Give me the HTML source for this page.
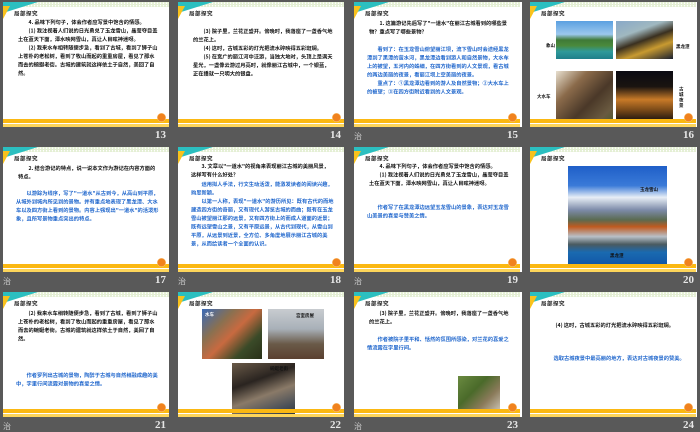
<!DOCTYPE html>
<html><head><meta charset="utf-8"><style>
*{margin:0;padding:0;box-sizing:border-box}
body{width:700px;height:431px;background:#595959;position:relative;overflow:hidden;font-family:"Liberation Sans","Noto Sans CJK SC",sans-serif}
.s{position:absolute;width:166px;height:125px;background:#fff;overflow:hidden}
.in{position:absolute;left:0;top:0;width:332px;height:250px;transform:scale(.5);transform-origin:0 0}
.top{position:absolute;left:0;top:0;width:332px;height:10px;background:#e4efd4;background-image:radial-gradient(circle,#fff 1.2px,transparent 1.6px);background-size:6px 5px}
.tri1{position:absolute;left:0;top:0;width:0;height:0;border-top:22px solid #2bbfc0;border-right:70px solid transparent}
.tri2{position:absolute;left:0;top:8px;width:0;height:0;border-top:26px solid #f9c21c;border-right:14px solid transparent}
.b1{position:absolute;left:0;bottom:8px;width:332px;height:8px;background:#fbb812}
.b2{position:absolute;left:0;bottom:0;width:332px;height:6px;background:#fdd55a}
.pn{position:absolute;right:6px;bottom:10px;width:18px;height:18px;border-radius:50%;background:#f0821e;border:1.5px solid #fbd08a}
.h{position:absolute;left:22px;top:15px;font:bold 11px "Noto Sans CJK SC",sans-serif;color:#222;letter-spacing:1px}
.t{position:absolute;left:30px;right:20px;font:bold 10.5px/17px "Noto Sans CJK SC",sans-serif;color:#111}
.t.bl{color:#1f66cc}
.t p{text-indent:2em}
.lab{position:absolute;width:30px;text-align:right;font:bold 11px "Liberation Serif",serif;color:#e6e6e6}
.zh{position:absolute;font:8px "Noto Sans CJK SC",sans-serif;color:#cfcfcf}
.ph{position:absolute}
.cap{position:absolute;font:bold 9px "Noto Sans CJK SC",sans-serif;color:#111}
</style></head><body>

<!-- Row 1 -->
<div class="s" style="left:3px;top:2px"><div class="in"><div class="top"></div><div class="tri1"></div><div class="tri2"></div><div class="h">局部探究</div>
<div class="t" style="top:32px"><p>4. 品味下列句子，体会作者应写景中饱含的情感。</p><p>(1) 我注视着人们说的日光勇兑了玉龙雪山，晶莹夺目盖土在蓝天下面，潭水映网雪山，真让人目眩神迷呀。</p><p>(2) 我来水车相转随便步急，看到了古城，看到了狮子山上苍朴的老松树，看到了牧山而起的重重房屋，看见了那水而去的蜿蜒老街。古城的建筑就这样依土于自然，美回了自然。</p></div>
<div class="b1"></div><div class="b2"></div><div class="pn"></div></div></div>

<div class="s" style="left:178px;top:2px"><div class="in"><div class="top"></div><div class="tri1"></div><div class="tri2"></div><div class="h">局部探究</div>
<div class="t" style="top:50px"><p>(3) 院子里，兰花正盛开。傍晚时，我落座了一盏香气地的兰花上。</p><p>(4) 这时，古城五彩的灯光把流水碎映得五彩斑斓。</p><p>(5) 在宽广的丽江河中泛游，当独大地时，头顶上是满天星光，一盏像云游过月亮时，就像丽江古城中，一个银蓝，正在播就一只明大的银盘。</p></div>
<div class="b1"></div><div class="b2"></div><div class="pn"></div></div></div>

<div class="s" style="left:354px;top:2px;width:168px"><div class="in"><div class="top"></div><div class="tri1"></div><div class="tri2"></div><div class="h">局部探究</div>
<div class="t" style="top:34px"><p>1. 这篇游记先后写了"一道水"在丽江古城看到的哪些景物？重点写了哪些景物？</p></div>
<div class="t bl" style="top:86px;left:26px"><p>看到了：在玉龙雪山俯望丽江坝，流下雪山时会途经黑龙潭到了黑潭的萤水河，黑龙潭边看到游人和自然景物，大水车上的被望，五河内的蛛细，在四方街看到的人文景观，看古城的两边美丽的夜景，看丽江坝上空美丽的夜景。</p><p>重点了：①黑龙潭边看到的游人及自然景物；②大水车上的被望；③在四方街附近看到的人文景观。</p></div>
<div class="b1"></div><div class="b2"></div><div class="pn"></div></div></div>

<div class="s" style="left:530px;top:2px;width:167px"><div class="in"><div class="top"></div><div class="tri1"></div><div class="tri2"></div><div class="h">局部探究</div>
<div class="ph" style="left:52px;top:38px;width:114px;height:76px;background:linear-gradient(180deg,#5aa0e0 0%,#9cc8ee 35%,#3f7a36 50%,#4a8a3c 65%,#2f9a9a 80%,#1f7f8a 100%)"></div>
<div class="ph" style="left:172px;top:38px;width:114px;height:76px;background:linear-gradient(160deg,#88a8c8 0%,#a0b8c0 30%,#3a3020 50%,#c89a30 70%,#1a2030 100%)"></div>
<div class="ph" style="left:52px;top:138px;width:114px;height:104px;background:linear-gradient(135deg,#e8e0d0 0%,#8a6a4a 30%,#4a3828 60%,#6a5a40 85%,#4a5a30 100%)"></div>
<div class="ph" style="left:172px;top:138px;width:114px;height:104px;background:linear-gradient(180deg,#0a0a12 0%,#1a1410 30%,#c87a28 55%,#7a4a18 75%,#0a0a10 100%)"></div>
<div class="cap" style="left:32px;top:80px">象山</div><div class="cap" style="left:292px;top:82px">黑龙潭</div>
<div class="cap" style="left:14px;top:182px">大水车</div><div class="cap" style="left:298px;top:168px;width:14px;line-height:11px">古城夜景</div>
<div class="b1"></div><div class="b2"></div><div class="pn"></div></div></div>

<div class="lab" style="left:136px;top:129px">13</div>
<div class="lab" style="left:311px;top:129px">14</div>
<div class="zh" style="left:354px;top:131px">治</div><div class="lab" style="left:488px;top:129px">15</div>
<div class="lab" style="left:664px;top:129px">16</div>

<!-- Row 2 -->
<div class="s" style="left:3px;top:147px"><div class="in"><div class="top"></div><div class="tri1"></div><div class="tri2"></div><div class="h">局部探究</div>
<div class="t" style="top:34px"><p>2. 结合游记的特点，说一说本文作为游记在内容方面的特点。</p></div>
<div class="t bl" style="top:84px;left:26px"><p>以游踪为线序，写了"一道水"从古到今，从高山到平原，从城外到城内所见到的景物。并有重点地表现了黑龙潭、大水车以及四方街上看到的景物。内容上强现出"一道水"的活泼形象，且所写景物重点突出的特点。</p></div>
<div class="b1"></div><div class="b2"></div><div class="pn"></div></div></div>

<div class="s" style="left:178px;top:147px"><div class="in"><div class="top"></div><div class="tri1"></div><div class="tri2"></div><div class="h">局部探究</div>
<div class="t" style="top:30px;left:26px"><p>3. 文章以"一道水"的视角来表现丽江古城的美丽风景，这样写有什么好处？</p></div>
<div class="t bl" style="top:66px;left:26px"><p>运用拟人手法，行文生动活泼，能激发读者的阅读兴趣，购思新颖。</p><p>以第一人称，表现"一道水"的游历所见：既有古代的而地建造四方街的奇丽，又有现代人游览古城的而曲；既有在玉龙雪山被望丽江那的远景，又有四方街上的而成人道面的近景；既有远望雪山之景，又有平原远景，从古代到现代，从雪山到平原，从远景到近景，全方位、多角度地展示丽江古城的美景，从而给读者一个全面的认识。</p></div>
<div class="b1"></div><div class="b2"></div><div class="pn"></div></div></div>

<div class="s" style="left:354px;top:147px;width:168px"><div class="in"><div class="top"></div><div class="tri1"></div><div class="tri2"></div><div class="h">局部探究</div>
<div class="t" style="top:30px"><p>4. 品味下列句子，体会作者应写景中饱含的情感。</p><p>(1) 我注视着人们说的日光勇兑了玉龙雪山，晶莹夺目盖土在蓝天下面，潭水映网雪山，真让人目眩神迷呀。</p></div>
<div class="t bl" style="top:112px;left:26px"><p>作者写了在黑龙潭边远望玉龙雪山的景象，表达对玉龙雪山美景的喜爱与赞美之情。</p></div>
<div class="b1"></div><div class="b2"></div><div class="pn"></div></div></div>

<div class="s" style="left:530px;top:147px;width:167px"><div class="in"><div class="top"></div><div class="tri1"></div><div class="tri2"></div><div class="h">局部探究</div>
<div class="ph" style="left:76px;top:38px;width:198px;height:196px;background:linear-gradient(180deg,#1f5fc8 0%,#3a7ad8 20%,#e8eef6 32%,#7c8aa8 45%,#5a6a50 55%,#c05a20 62%,#b8c0c8 72%,#4a5a60 80%,#1a6ab0 88%,#1258a8 100%)"></div>
<div class="cap" style="left:220px;top:78px">玉龙雪山</div><div class="cap" style="left:160px;top:210px">黑龙潭</div>
<div class="b1"></div><div class="b2"></div><div class="pn"></div></div></div>

<div class="zh" style="left:3px;top:276px">治</div><div class="lab" style="left:136px;top:274px">17</div>
<div class="zh" style="left:178px;top:276px">治</div><div class="lab" style="left:311px;top:274px">18</div>
<div class="zh" style="left:354px;top:276px">治</div><div class="lab" style="left:488px;top:274px">19</div>
<div class="lab" style="left:664px;top:274px">20</div>

<!-- Row 3 -->
<div class="s" style="left:3px;top:292px"><div class="in"><div class="top"></div><div class="tri1"></div><div class="tri2"></div><div class="h">局部探究</div>
<div class="t" style="top:34px"><p>(2) 我来水车相转随便步急，看到了古城，看到了狮子山上苍朴的老松树，看到了牧山而起的重重房屋，看见了那水而去的蜿蜒老街。古城的建筑就这样依土于自然，美回了自然。</p></div>
<div class="t bl" style="top:158px;left:26px"><p>作者罗列出古城的景物，陶醉于古城与自然相融成趣的美中，字里行间流露对景物的喜爱之情。</p></div>
<div class="b1"></div><div class="b2"></div><div class="pn"></div></div></div>

<div class="s" style="left:178px;top:292px"><div class="in"><div class="top"></div><div class="tri1"></div><div class="tri2"></div><div class="h">局部探究</div>
<div class="ph" style="left:48px;top:34px;width:120px;height:100px;background:linear-gradient(135deg,#3a6ab8 0%,#8a7050 30%,#c86a40 50%,#3a4a28 75%,#2a3018 100%)"></div>
<div class="ph" style="left:180px;top:34px;width:112px;height:100px;background:linear-gradient(180deg,#c8ccd0 0%,#a8b0b8 40%,#6a5a48 70%,#5a4030 100%)"></div>
<div class="ph" style="left:108px;top:142px;width:126px;height:102px;background:linear-gradient(160deg,#6a5a48 0%,#2a2420 35%,#8a7a68 60%,#4a5058 85%,#303840 100%)"></div>
<div class="cap" style="left:54px;top:38px;color:#fff">水车</div><div class="cap" style="left:236px;top:40px">宫室房屋</div><div class="cap" style="left:184px;top:146px">蜿蜒老街</div>
<div class="b1"></div><div class="b2"></div><div class="pn"></div></div></div>

<div class="s" style="left:354px;top:292px;width:168px"><div class="in"><div class="top"></div><div class="tri1"></div><div class="tri2"></div><div class="h">局部探究</div>
<div class="t" style="top:34px"><p>(3) 院子里，兰花正盛开。傍晚时，我落座了一盏香气地的兰花上。</p></div>
<div class="t bl" style="top:86px;left:26px"><p>作者被院子里平和、恬然的氛围所感染，对兰花的喜爱之情流露在字里行间。</p></div>
<div class="ph" style="left:208px;top:168px;width:84px;height:68px;background:linear-gradient(135deg,#6a8a40 0%,#4a6a2a 40%,#8a7a5a 70%,#c8c0b0 100%)"></div>
<div class="b1"></div><div class="b2"></div><div class="pn"></div></div></div>

<div class="s" style="left:530px;top:292px;width:167px"><div class="in"><div class="top"></div><div class="tri1"></div><div class="tri2"></div><div class="h">局部探究</div>
<div class="t" style="top:58px"><p>(4) 这时，古城五彩的灯光把流水碎映得五彩斑斓。</p></div>
<div class="t bl" style="top:124px;left:26px"><p>选取古城夜景中最亮丽的地方，表达对古城夜景的赞美。</p></div>
<div class="b1"></div><div class="b2"></div><div class="pn"></div></div></div>

<div class="zh" style="left:3px;top:421px">治</div><div class="lab" style="left:136px;top:419px">21</div>
<div class="lab" style="left:311px;top:419px">22</div>
<div class="zh" style="left:354px;top:421px">治</div><div class="lab" style="left:488px;top:419px">23</div>
<div class="lab" style="left:664px;top:419px">24</div>
</body></html>
